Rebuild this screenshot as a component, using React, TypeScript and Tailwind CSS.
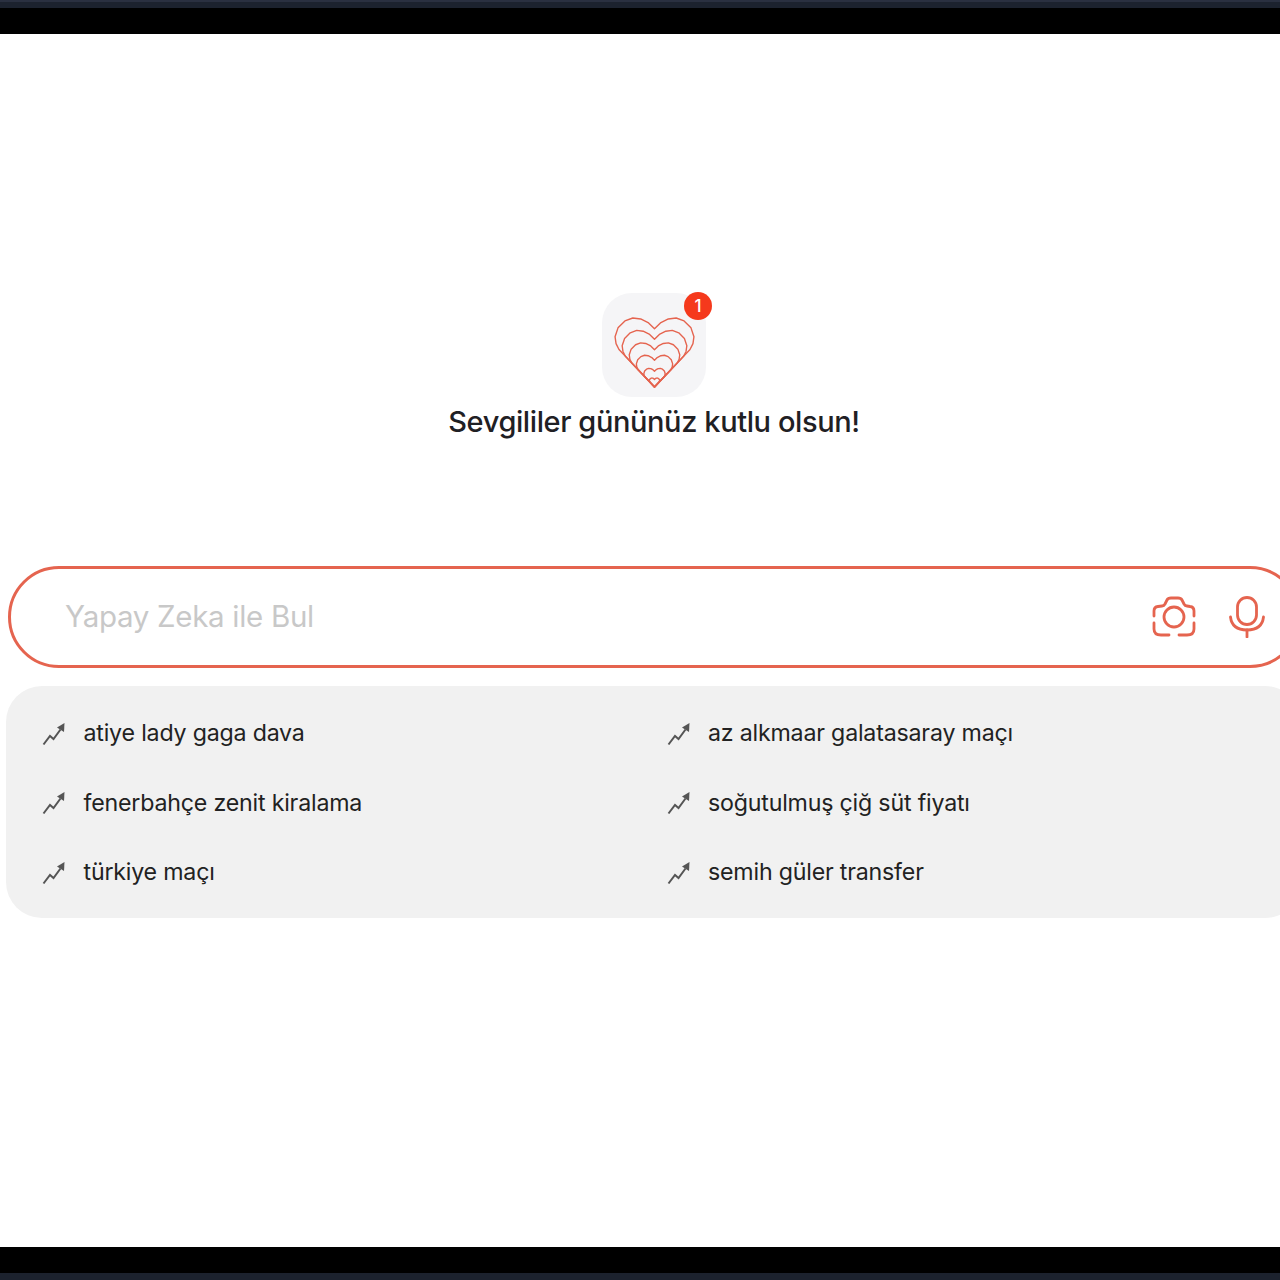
import React from 'react';

const suggestions = [
  'atiye lady gaga dava',
  'az alkmaar galatasaray maçı',
  'fenerbahçe zenit kiralama',
  'soğutulmuş çiğ süt fiyatı',
  'türkiye maçı',
  'semih güler transfer',
];

const heartPath =
  'M40 70 L4 32 L1 26 L0 19 L3 10 L10 3 L18 0 L26 1 L34 5 L40 11 L46 5 L54 1 L62 0 L70 3 L77 10 L80 19 L79 26 L76 32 Z';

function HeartIcon() {
  const scales = [1, 0.82, 0.64, 0.46, 0.27, 0.13];
  return (
    <svg width="81" height="71" viewBox="-1 -1 82 72" fill="none" className="mt-[24px]">
      {scales.map((s) => (
        <path
          key={s}
          d={heartPath}
          transform={`translate(${40 - 40 * s} ${70 - 70 * s}) scale(${s})`}
          stroke="#e5644f"
          strokeWidth={1.4 / s}
          strokeLinejoin="round"
        />
      ))}
    </svg>
  );
}

function TrendIcon() {
  return (
    <svg width="24" height="24" viewBox="0 0 24 24" fill="none" className="shrink-0">
      <path d="M1.5 22.5 L8 14 L11.5 17 L18.5 7.5" stroke="#555" strokeWidth="2" />
      <path d="M15 5.5 L22.5 1 L22 10 Z" fill="#555" />
    </svg>
  );
}

function CameraIcon() {
  return (
    <svg width="44" height="42" viewBox="0 0 44 42" fill="none" stroke="#e5644f" strokeWidth="2.8" strokeLinecap="round" strokeLinejoin="round">
      <path d="M2 20 V15 Q2 11 6 10.5 L10 10 Q12 9.8 13 8 L15 4 Q16 2 19 2 H26 Q29 2 30 4 L32 8 Q33 9.8 35 10 L38 10.5 Q42 11 42 15 V20" />
      <path d="M2 27 V33 Q2 39 9 39 H17" />
      <path d="M42 27 V33 Q42 39 35 39 H27" />
      <circle cx="22" cy="21" r="10" />
    </svg>
  );
}

function MicIcon() {
  return (
    <svg width="36" height="42" viewBox="0 0 36 42" fill="none" stroke="#e5644f" strokeWidth="2.8" strokeLinecap="round">
      <rect x="8.5" y="1.5" width="19" height="27" rx="9.5" />
      <path d="M1.5 21 Q3 34 18 34 Q33 34 34.5 21" />
      <path d="M18 34 V41" />
    </svg>
  );
}

export default function App() {
  return (
    <div className="h-[1280px] w-[1280px] overflow-hidden bg-black font-['Inter','Noto_Sans',sans-serif]">
      <div className="h-[8px] border-t-2 border-[#2a3040] bg-[#1c222e]" />
      <div className="h-[26px]" />
      <main className="h-[1213px] bg-white">
        <div className="flex w-[1308px] flex-col items-center pt-[259px]">
          <div className="relative flex h-[104px] w-[104px] justify-center rounded-[30px] bg-[#f5f5f7]">
            <HeartIcon />
            <span className="absolute right-[-6px] top-[-1px] flex h-[28px] w-[28px] items-center justify-center rounded-full bg-[#f5391c] pt-[1px] text-[17px] font-medium text-white">
              1
            </span>
          </div>
          <h1 className="mt-[9px] text-[29px] leading-[32px] font-medium tracking-[-0.4px] text-[#1f2024]">
            Sevgililer gününüz kutlu olsun!
          </h1>
        </div>

        <div className="ml-[8px] mt-[128px] flex h-[102px] w-[1293px] items-center rounded-[51px] border-[3px] border-[#e5644f] pl-[54px] pr-[33px]">
          <span className="mb-[2px] flex-1 text-[29.5px] tracking-[-0.3px] text-[#c8c8c8]">Yapay Zeka ile Bul</span>
          <div className="flex items-center gap-[33px]">
            <CameraIcon />
            <MicIcon />
          </div>
        </div>

        <div className="ml-[6px] mt-[18px] grid h-[232px] w-[1295px] grid-cols-[624.5px_1fr] content-start rounded-[36px] bg-[#f1f1f1] pl-[36px] pt-[13px]">
          {suggestions.map((s) => (
            <div key={s} className="flex h-[69.5px] items-center gap-[17.5px] text-[23.2px] tracking-[-0.2px] text-[#222]">
              <TrendIcon />
              <span>{s}</span>
            </div>
          ))}
        </div>
      </main>
      <div className="h-[26px]" />
      <div className="h-[7px] bg-[#1c222e]" />
    </div>
  );
}
